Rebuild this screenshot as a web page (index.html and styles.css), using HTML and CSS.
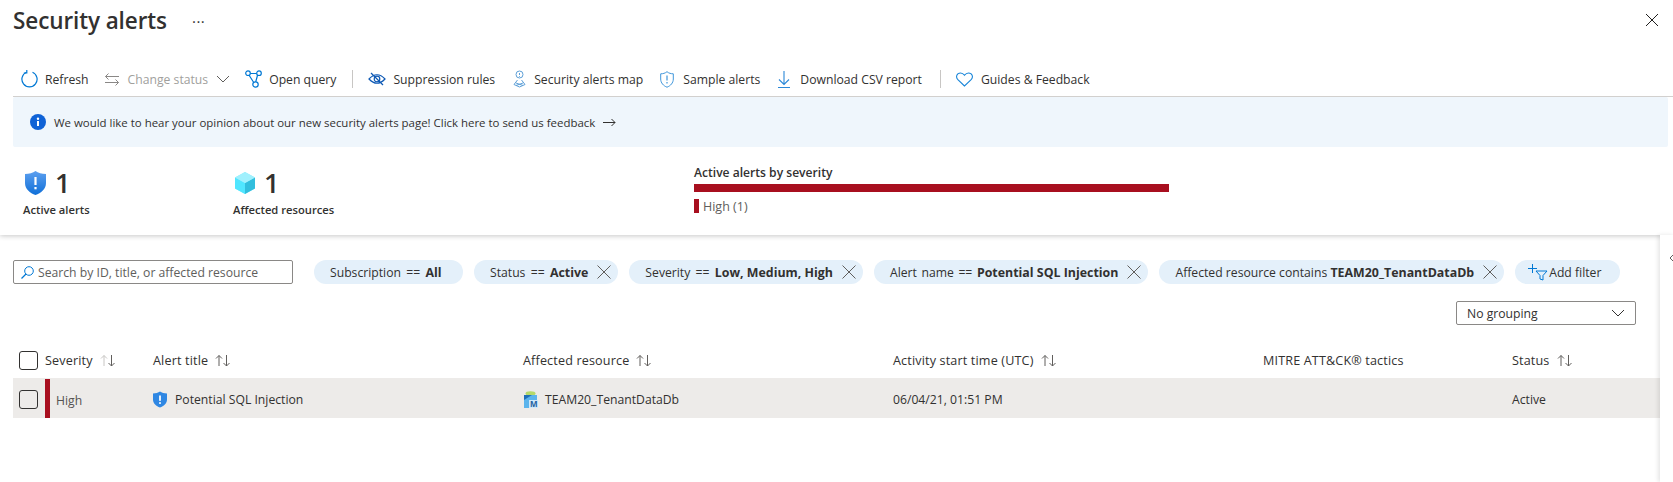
FILE: index.html
```html
<!DOCTYPE html>
<html lang="en">
<head>
<meta charset="utf-8">
<title>Security alerts</title>
<link rel="stylesheet" href="styles.css">
</head>
<body>
<header class="top">
  <div class="title-row">
    <h1 class="title">Security alerts</h1>
    <span class="more">···</span>
    <svg class="close" width="12" height="12" viewBox="0 0 12 12"><path d="M0 0L12 12M12 0L0 12" stroke="#201f1e" stroke-width="1" fill="none"/></svg>
  </div>
  <nav class="toolbar">
    <span class="tool tool-refresh"><svg class="ic" width="17" height="18" viewBox="0 0 17 18"><path d="M5.5 2.2A7.6 7.6 0 1 0 11.5 2.2" stroke="#0078d4" fill="none" stroke-width="1.2"/><path d="M5.8 0V3H2.800" stroke="#0078d4" fill="none" stroke-width="1.2"/></svg>Refresh</span>
    <span class="tool tool-off"><svg class="ic" width="16" height="13" viewBox="0 0 16 13"><path d="M15 3.5H1.5M4.5 0.5L1.5 3.5L4.5 6.5M1 9.5H14.5M11.5 6.5L14.5 9.5L11.5 12.5" stroke="#8a8886" fill="none"/></svg>Change status<svg class="chev" width="14" height="8" viewBox="0 0 14 8"><path d="M1 1L7 7L13 1" stroke="#605e5c" fill="none"/></svg></span>
    <span class="tool tool-query"><svg class="ic" width="17" height="18" viewBox="0 0 17 18"><g stroke="#0078d4" fill="#fff" stroke-width="1.2"><path d="M3 3.5H13M3 3.5L10 14.500M13 3.5L10 14.500" fill="none"/><circle cx="3" cy="3.2" r="2.300"/><circle cx="14" cy="3.2" r="2.300"/><circle cx="10.500" cy="14.500" r="2.700"/></g></svg>Open query</span>
    <span class="sep"></span>
    <span class="tool tool-supp"><svg class="ic" width="18" height="14" viewBox="0 0 18 14"><path d="M1 7Q9 -1.500 17 7Q9 15.500 1 7Z" stroke="#0f5ab5" fill="none" stroke-width="1.2"/><circle cx="9" cy="7" r="2.800" stroke="#0f5ab5" fill="none" stroke-width="1.2"/><path d="M3 1L15 13" stroke="#0f5ab5" stroke-width="1.2"/></svg>Suppression rules</span>
    <span class="tool tool-map"><svg class="ic" width="13" height="18" viewBox="0 0 13 18"><g stroke="#5ea0d8" fill="none"><circle cx="6.500" cy="4.500" r="3.500"/><path d="M6.500 3V5M6.500 6V6.800"/><path d="M4.500 10L1 14.500L6.500 17L12 14.500L8.500 10"/><path d="M3 13L10 15.500M10 13L3 15.500"/></g></svg>Security alerts map</span>
    <span class="tool tool-sample"><svg class="ic" width="14" height="17" viewBox="0 0 14 17"><path d="M7 .7C5 2.300 3 2.800 .7 2.800V8C.7 12 3.500 14.800 7 16.200C10.500 14.800 13.300 12 13.300 8V2.800C11 2.800 9 2.300 7 .7Z" stroke="#3f96db" fill="none"/><path d="M7 4.500V9.500M7 11V12.500" stroke="#3f96db" stroke-width="1.200"/></svg>Sample alerts</span>
    <span class="tool tool-down"><svg class="ic" width="12" height="17" viewBox="0 0 12 17"><path d="M6 0V13M1 8.500L6 13.500L11 8.500M0 16.500H12" stroke="#2b88d8" fill="none" stroke-width="1.100"/></svg>Download CSV report</span>
    <span class="sep"></span>
    <span class="tool"><svg class="ic" width="17" height="15" viewBox="0 0 17 15"><path d="M8.500 14L1.600 7.300C-.3 5.300 .5 1 4.500 1C6.500 1 7.700 2.200 8.500 3.300C9.300 2.200 10.500 1 12.500 1C16.500 1 17.300 5.300 15.400 7.300Z" stroke="#1a86d9" fill="none" stroke-width="1.100"/></svg>Guides &amp; Feedback</span>
  </nav>
  <div class="banner">
    <svg class="info" width="16" height="16" viewBox="0 0 16 16"><circle cx="8" cy="8" r="8" fill="#0f62d6"/><rect x="7" y="7" width="2" height="5" fill="#fff"/><circle cx="8" cy="4.800" r="1.200" fill="#fff"/></svg>
    <span>We would like to hear your opinion about our new security alerts page! Click here to send us feedback</span>
    <svg class="arrow" width="13" height="9" viewBox="0 0 13 9"><path d="M0 4.500H12M8.500 1L12 4.500L8.500 8" stroke="#323130" fill="none"/></svg>
  </div>
  <section class="summary">
    <div class="stat stat-alerts">
      <div class="stat-top">
        <svg width="21" height="24" viewBox="0 0 21 24"><defs><linearGradient id="sh" x1="0" y1="0" x2="0" y2="1"><stop offset="0" stop-color="#5ea0ef"/><stop offset="1" stop-color="#0f6fd8"/></linearGradient></defs><path d="M10.500 0C8 2 4 3 0 3V12C0 18 5 22 10.500 24C16 22 21 18 21 12V3C17 3 13 2 10.500 0Z" fill="url(#sh)"/><rect x="9.400" y="6" width="2.200" height="8" fill="#fff"/><rect x="9.400" y="16" width="2.200" height="2.300" fill="#fff"/></svg>
        <span class="num">1</span>
      </div>
      <div class="stat-label">Active alerts</div>
    </div>
    <div class="stat stat-res">
      <div class="stat-top">
        <svg width="20" height="22" viewBox="0 0 20 22"><path d="M10 0L20 5.500V16.500L10 22L0 16.500V5.500Z" fill="#83ecfd"/><path d="M10 11L20 5.500V16.500L10 22Z" fill="#32bedd"/><path d="M0 5.500L10 11V22L0 16.500Z" fill="#50e6ff"/><path d="M10 0L20 5.500L10 11L0 5.500Z" fill="#a0f0fd"/></svg>
        <span class="num">1</span>
      </div>
      <div class="stat-label">Affected resources</div>
    </div>
    <div class="severity">
      <div class="sev-title">Active alerts by severity</div>
      <div class="sev-bar"></div>
      <div class="sev-legend"><span class="sev-key"></span>High (1)</div>
    </div>
  </section>
</header>

<div class="workspace">
  <main class="content">
    <div class="filters">
      <label class="search"><svg width="13" height="13" viewBox="0 0 13 13"><circle cx="8" cy="5" r="4.300" stroke="#0078d4" fill="none"/><path d="M5 8L.5 12.500" stroke="#0078d4" stroke-width="1.200"/></svg><span>Search by ID, title, or affected resource</span></label>
      <span class="pill pill-sub"><span>Subscription == <b>All</b></span></span>
      <span class="pill pill-x"><span>Status == <b>Active</b></span><svg class="x" width="14" height="14" viewBox="0 0 14 14"><path d="M.5 .5L13.500 13.500M13.500 .5L.5 13.500" stroke="#605e5c" fill="none"/></svg></span>
      <span class="pill pill-x"><span>Severity == <b>Low, Medium, High</b></span><svg class="x" width="14" height="14" viewBox="0 0 14 14"><path d="M.5 .5L13.500 13.500M13.500 .5L.5 13.500" stroke="#605e5c" fill="none"/></svg></span>
      <span class="pill pill-x pill-name"><span>Alert name == <b>Potential SQL Injection</b></span><svg class="x" width="14" height="14" viewBox="0 0 14 14"><path d="M.5 .5L13.500 13.500M13.500 .5L.5 13.500" stroke="#605e5c" fill="none"/></svg></span>
      <span class="pill pill-x pill-res"><span>Affected resource contains <b>TEAM20_TenantDataDb</b></span><svg class="x" width="14" height="14" viewBox="0 0 14 14"><path d="M.5 .5L13.500 13.500M13.500 .5L.5 13.500" stroke="#605e5c" fill="none"/></svg></span>
      <span class="pill pill-add"><svg width="20" height="17" viewBox="0 0 20 17"><path d="M4.500 0V9M0 4.500H9" stroke="#0078d4" fill="none"/><path d="M8 7H19L15 11.500V16L12 15V11.500Z" stroke="#0078d4" fill="none"/></svg><span>Add filter</span></span>
    </div>
    <div class="group-row">
      <div class="dropdown"><span>No grouping</span><svg width="14" height="8" viewBox="0 0 14 8"><path d="M1 1L7 7L13 1" stroke="#323130" fill="none"/></svg></div>
    </div>
    <div class="table">
      <div class="row head">
        <div class="cell cell-check"><span class="check"></span></div>
        <div class="cell">Severity<svg class="sort" width="16" height="13" viewBox="0 0 16 13"><path d="M4 12V1.500M1 4.500L4 1.500L7 4.500" stroke="#c8c6c4" fill="none"/><path d="M11.500 1V12M8.500 9L11.500 12L14.500 9" stroke="#605e5c" fill="none"/></svg></div>
        <div class="cell">Alert title<svg class="sort" width="16" height="13" viewBox="0 0 16 13"><path d="M4 12V1.500M1 4.500L4 1.500L7 4.500" stroke="#605e5c" fill="none"/><path d="M11.500 1V12M8.500 9L11.500 12L14.500 9" stroke="#605e5c" fill="none"/></svg></div>
        <div class="cell">Affected resource<svg class="sort" width="16" height="13" viewBox="0 0 16 13"><path d="M4 12V1.500M1 4.500L4 1.500L7 4.500" stroke="#605e5c" fill="none"/><path d="M11.500 1V12M8.500 9L11.500 12L14.500 9" stroke="#605e5c" fill="none"/></svg></div>
        <div class="cell">Activity start time (UTC)<svg class="sort" width="16" height="13" viewBox="0 0 16 13"><path d="M4 12V1.500M1 4.500L4 1.500L7 4.500" stroke="#605e5c" fill="none"/><path d="M11.500 1V12M8.500 9L11.500 12L14.500 9" stroke="#605e5c" fill="none"/></svg></div>
        <div class="cell">MITRE ATT&amp;CK® tactics</div>
        <div class="cell">Status<svg class="sort" width="16" height="13" viewBox="0 0 16 13"><path d="M4 12V1.500M1 4.500L4 1.500L7 4.500" stroke="#605e5c" fill="none"/><path d="M11.500 1V12M8.500 9L11.500 12L14.500 9" stroke="#605e5c" fill="none"/></svg></div>
      </div>
      <div class="row data">
        <div class="cell cell-check"><span class="check"></span></div>
        <div class="cell cell-sev">High</div>
        <div class="cell"><svg class="cell-ic" width="14" height="17" viewBox="0 0 21 24"><path d="M10.500 0C8 2 4 3 0 3V12C0 18 5 22 10.500 24C16 22 21 18 21 12V3C17 3 13 2 10.500 0Z" fill="#2f87e3"/><rect x="9.200" y="6" width="2.600" height="8" fill="#fff"/><rect x="9.200" y="16" width="2.600" height="2.600" fill="#fff"/></svg>Potential SQL Injection</div>
        <div class="cell"><svg class="cell-ic db" width="15" height="17" viewBox="0 0 15 17"><ellipse cx="7.500" cy="2.500" rx="5" ry="2.200" fill="#b5d96a"/><path d="M1 4H14V17H1Z" fill="#5bb4ec"/><path d="M1 4H9L1 9Z" fill="#1f6fb8"/><path d="M6 9H15V17H6Z" fill="#cfe9fb"/><text x="7" y="16" class="db-m">M</text></svg>TEAM20_TenantDataDb</div>
        <div class="cell">06/04/21, 01:51 PM</div>
        <div class="cell"></div>
        <div class="cell">Active</div>
      </div>
    </div>
  </main>
  <aside class="side"><svg width="6" height="10" viewBox="0 0 6 10"><path d="M5.500 .5L1 5L5.500 9.500" stroke="#605e5c" fill="none"/></svg></aside>
</div>
</body>
</html>
```
FILE: styles.css
```css
* { box-sizing: border-box; }
html, body { margin: 0; padding: 0; }
body {
  width: 1673px;
  height: 482px;
  overflow: hidden;
  background: #fff;
  color: #323130;
  font-family: "Open Sans", "Noto Sans", sans-serif;
  font-size: 12.2px;
}
svg { display: block; flex: none; }

.top { position: relative; z-index: 1; height: 235px; box-shadow: 0 1px 5px rgba(0,0,0,.22); background: #fff; }

.title-row { height: 58px; display: flex; align-items: flex-start; padding: 4px 15px 0 13px; }
.title { margin: 0; font-size: 22.500px; font-weight: 600; line-height: 34px; color: #323130; letter-spacing: -.1px; }
.more { margin: 5px 0 0 25px; font-size: 15px; line-height: 24px; letter-spacing: .5px; color: #323130; }
.close { margin: 10px 0 0 auto; }

.toolbar { height: 39px; margin-left: 13px; padding: 4px 0 0 8px; display: flex; align-items: center; border-bottom: 1px solid #d2d0ce; white-space: nowrap; }
.tool { display: flex; align-items: center; margin-right: 15px; }
.tool-off { color: #a19f9d; }
.ic { margin-right: 8px; }
.chev { margin-left: 8px; }
.sep { width: 1px; height: 18px; background: #c8c6c4; margin: 0 15px 0 1px; }
.tool-refresh { margin-right: 15px; }
.tool-refresh .ic, .tool-query .ic, .tool-supp .ic { margin-right: 7px; }
.tool-supp { margin-right: 18px; }
.tool-map { margin-right: 17px; }
.tool-sample { margin-right: 18px; }
.tool-sample .ic { margin-right: 9px; }
.tool-down { margin-right: 17px; }
.tool-down .ic { margin-right: 10px; }

.banner { height: 50px; margin: 0 5px 0 13px; padding-left: 17px; display: flex; align-items: center; gap: 8px; background: #eff6fc; border-radius: 2px; font-size: 11.450px; }

.summary { height: 88px; padding: 24px 0 0 23px; display: flex; }
.stat-alerts { width: 210px; }
.stat-res { width: 461px; }
.stat-top { height: 24px; padding-left: 2px; display: flex; align-items: center; gap: 9px; }
.num { font-size: 27px; font-weight: 600; line-height: 24px; color: #323130; }
.stat-label { margin-top: 7px; font-size: 11.200px; font-weight: 600; line-height: 16px; }
.severity { width: 475px; }
.sev-title { font-size: 12.100px; font-weight: 600; line-height: 14px; margin-top: -5px; }
.sev-bar { height: 8px; margin-top: 4px; background: #a80f1f; }
.sev-legend { display: flex; align-items: center; gap: 4px; height: 14px; margin-top: 7px; color: #605e5c; font-size: 12.500px; }
.sev-key { width: 5px; height: 14px; background: #a80f1f; }

.workspace { height: 247px; display: flex; }
.content { width: 1660px; }
.side { flex: 1; padding: 18px 0 0 9px; background: #fff; box-shadow: -2px 0 4px rgba(0,0,0,.1); position: relative; z-index: 1; }

.filters { padding: 25px 0 0 13px; display: flex; gap: 11px; white-space: nowrap; }
.search { width: 280px; height: 24px; margin-right: 10px; padding-left: 7px; display: flex; align-items: center; gap: 4px; border: 1px solid #8a8886; border-radius: 2px; color: #605e5c; }
.pill { height: 24px; padding: 0 16px; display: flex; align-items: center; background: #e4f0fa; border-radius: 12px; word-spacing: 2.100px; }
.pill b { font-weight: 700; font-size: 12.400px; word-spacing: 0; }
.pill-sub { width: 149px; }
.pill-x { padding-right: 7px; }
.pill-name { word-spacing: 1.400px; }
.pill-res { word-spacing: 0; }
.x { margin-left: 9px; }
.pill-add { padding: 0 19px 0 13px; gap: 1px; word-spacing: 0; }

.group-row { padding: 17px 24px 0 0; display: flex; justify-content: flex-end; }
.dropdown { width: 180px; height: 24px; padding: 0 10px; display: flex; align-items: center; justify-content: space-between; border: 1px solid #8a8886; border-radius: 2px; }

.table { margin-left: 13px; }
.row { display: grid; grid-template-columns: 32px 108px 370px 370px 370px 249px 148px; }
.head { height: 53px; padding-top: 18px; font-size: 12.600px; letter-spacing: .15px; }
.data { height: 40px; background: #edebe9; }
.cell { display: flex; align-items: center; min-width: 0; }
.head .cell { gap: 7px; }
.data .cell { padding-top: 2px; }
.cell-check { padding-left: 6px; }
.check { width: 19px; height: 19px; border: 1px solid #323130; border-radius: 3px; background: #fff; }
.data .check { background: transparent; }
.data .cell-sev { border-left: 5px solid #a80f1f; margin-top: 1px; padding: 3px 0 0 6px; color: #555351; }
.cell-ic { margin-right: 8px; }
.db { margin-right: 7px; }
.db-m { font: 700 8px "Open Sans", sans-serif; fill: #1f5f9f; }
```
